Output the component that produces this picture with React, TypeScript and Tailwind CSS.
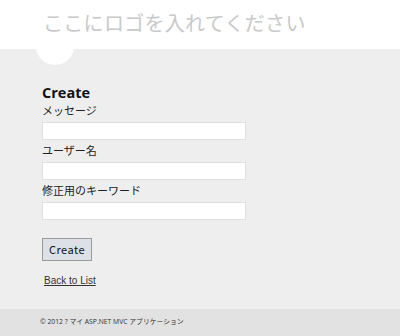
import React from "react";

const jp = { fontFamily: '"Noto Sans", "Noto Sans CJK JP", sans-serif' };

export default function App() {
  return (
    <div className="relative flex h-[336px] w-[400px] flex-col overflow-hidden bg-[#eeeeee]" style={jp}>
      <header className="relative z-10 h-[49px] bg-white pl-[43px] pt-[9px]">
        <div className="text-[20px] leading-[28px] tracking-[0.3px] text-[#c9c9c9]" style={{ fontFamily: '"Noto Sans CJK JP", sans-serif' }}>
          ここにロゴを入れてください
        </div>
      </header>
      <div className="absolute left-[36px] top-[27px] z-0 h-[38px] w-[38px] rounded-full bg-white" />
      <main className="relative z-10 flex-1 pl-[42px] pt-[35px]">
        <h2 className="text-[14.5px] font-bold leading-[18px] text-[#111]" style={{ fontFamily: '"Open Sans", "Noto Sans", sans-serif' }}>Create</h2>
        {["メッセージ", "ユーザー名", "修正用のキーワード"].map((l, i) => (
          <div key={l} className={i === 0 ? "" : "mt-[2px]"}>
            <div className="text-[11px] leading-[16px] text-[#222]" style={{ fontFamily: '"Noto Sans CJK JP", sans-serif' }}>{l}</div>
            <div className="mt-[4px] h-[18px] w-[204px] border border-[#e0e0e0] bg-white" />
          </div>
        ))}
        <button className="mt-[18px] flex h-[23px] w-[50px] items-center justify-center border border-[#9a9a9a] bg-[#dbe1e6] text-[11px] tracking-[0.5px] text-[#111]" style={{ fontFamily: '"Noto Sans CJK JP", sans-serif' }}>
          Create
        </button>
        <div className="mt-[13px] pl-[2px] text-[10px] leading-[13px]">
          <a className="text-[10px] leading-[13px] text-[#333] underline" style={{ fontFamily: '"Liberation Sans", sans-serif' }}>Back to List</a>
        </div>
      </main>
      <footer className="flex h-[27px] items-center bg-[#e2e2e2] pl-[40px]">
        <span className="text-[6.8px] text-[#333]" style={{ fontFamily: '"Open Sans", "Noto Sans CJK JP", sans-serif' }}>© 2012 ? マイ ASP.NET MVC アプリケーション</span>
      </footer>
    </div>
  );
}
